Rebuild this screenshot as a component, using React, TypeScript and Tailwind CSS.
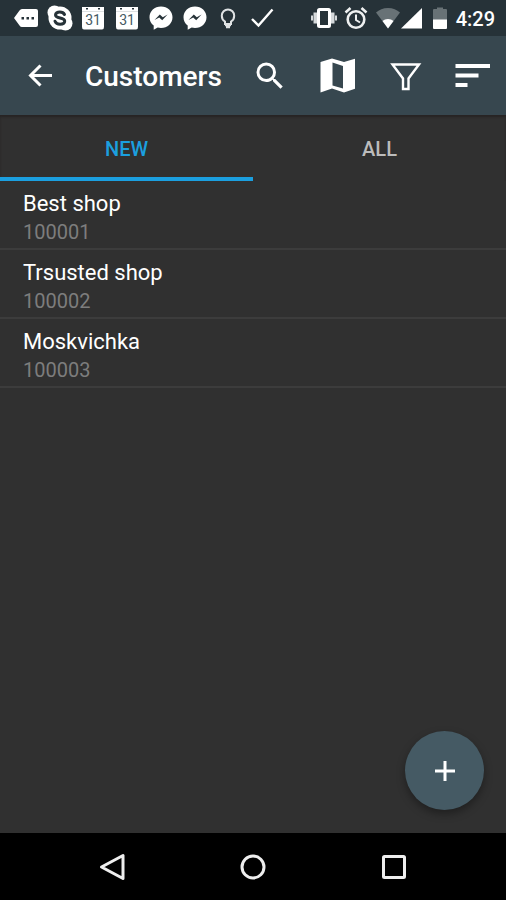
import { useState } from "react";
import type { ReactNode } from "react";

type Customer = { name: string; code: string };

const customers: Customer[] = [
  { name: "Best shop", code: "100001" },
  { name: "Trsusted shop", code: "100002" },
  { name: "Moskvichka", code: "100003" },
];

function MessageIcon() {
  return (
    <svg className="h-6 w-6" viewBox="0 0 24 24" aria-hidden="true">
      <path d="M0 12 5.5 4.5Q6.500 3 8 3H22q2 0 2 2v14q0 2-2 2H8q-1.500 0-2.500-1.500z" fill="#fff" />
      <path d="M7.500 11h2.500v2.500H7.500zM12.500 11H15v2.500h-2.500zM17.500 11H20v2.500h-2.500z" fill="#263238" />
    </svg>
  );
}

function SkypeIcon() {
  return (
    <svg className="h-6 w-6 overflow-visible" viewBox="0 0 24 24" aria-hidden="true">
      <circle cx="12" cy="12" r="11.500" fill="#fff" />
      <circle cx="6.500" cy="6.500" r="7" fill="#fff" />
      <circle cx="17.500" cy="17.500" r="7" fill="#fff" />
      <path
        d="M16.500 8.500C15.500 6.500 13.800 6 11.800 6 9.300 6 7.500 7.200 7.500 9c0 4 9.200 2 9.200 6 0 2-2 3.200-4.600 3.200-2.500 0-4.300-1-5.100-3"
        fill="none"
        stroke="#263238"
        strokeWidth="3"
        strokeLinecap="round"
      />
    </svg>
  );
}

function CalendarIcon() {
  return (
    <svg className="h-6 w-6" viewBox="0 0 24 24" aria-hidden="true">
      <path d="M1 1h22v20q0 2.500-2 2.500H3q-2 0-2-2.500z" fill="#fff" />
      <path d="M5 2h2v1.500H5zM17 2h2v1.500h-2z" fill="#263238" />
      <path d="M1 5.500h22" stroke="#dde0e1" strokeWidth="1" />
      <text x="12" y="19" textAnchor="middle" fontSize="14" fill="#455a64" fontFamily="Roboto, sans-serif">
        31
      </text>
    </svg>
  );
}

function MessengerIcon() {
  return (
    <svg className="h-6 w-6" viewBox="0 0 24 24" aria-hidden="true">
      <path d="M12 .5C5.500.5.5 5.200.5 11.200c0 3.400 1.600 6.300 4.200 8.300v4.300l4-2.200c1 .3 2.100.4 3.300.4 6.500 0 11.500-4.800 11.500-10.800S18.500.5 12 .5z" fill="#fff" />
      <path d="M5.500 14 10.800 8.500l3 2.700 4.800-2.700-5.400 5.700-3-2.700z" fill="#263238" />
    </svg>
  );
}

function BulbIcon() {
  return (
    <svg className="h-6 w-6" viewBox="0 0 24 24" aria-hidden="true" fill="none" stroke="#e0e3e4">
      <path d="M9 15.500C6.800 14.200 5.800 12 5.800 9.700a6.200 6.200 0 0 1 12.400 0c0 2.300-1 4.500-3.200 5.800v2.500H9z" strokeWidth="2" />
      <path d="M9 19.200h6M10 21.200h4" strokeWidth="2" />
    </svg>
  );
}

function CheckIcon() {
  return (
    <svg className="h-6 w-6" viewBox="0 0 24 24" aria-hidden="true">
      <path d="M2 13 8.500 19.500 22.500 3.500" fill="none" stroke="#fff" strokeWidth="2.400" />
    </svg>
  );
}

function VibrateIcon() {
  return (
    <svg className="h-6 w-7" viewBox="0 0 28 24" aria-hidden="true">
      <rect x="8.500" y="3.500" width="11" height="17" rx="1" fill="none" stroke="#fff" strokeWidth="3" />
      <path d="M3.500 6.500h3.500v11h-3.500zM21 6.500h3.500v11h-3.500zM1 9.500h2v5H1zM25 9.500H27v5h-2z" fill="#d5d9db" />
    </svg>
  );
}

function AlarmIcon() {
  return (
    <svg className="h-6 w-6" viewBox="0 0 24 24" aria-hidden="true" fill="none" stroke="#eef0f0">
      <circle cx="12" cy="13.500" r="8.300" strokeWidth="2.600" />
      <path d="M12 8.500v5.500l4 2.500" strokeWidth="2" />
      <path d="M1.500 6.500 6.500 2M22.500 6.500 17.500 2" strokeWidth="2.600" />
    </svg>
  );
}

function WifiIcon() {
  return (
    <svg className="h-6 w-6" viewBox="0 0 24 24" aria-hidden="true">
      <path d="M12 22.500 0 6.500C3 3.800 7.200 2 12 2s9 1.800 12 4.500z" fill="#687276" />
      <path d="M12 22.500 6.500 15c1.500-1.200 3.400-2 5.500-2s4 .8 5.500 2z" fill="#fff" />
    </svg>
  );
}

function SignalIcon() {
  return (
    <svg className="h-6 w-6" viewBox="0 0 24 24" aria-hidden="true">
      <path d="M22 2V22.500H1z" fill="#fff" />
    </svg>
  );
}

function BatteryIcon() {
  return (
    <svg className="h-6 w-4" viewBox="0 0 16 24" aria-hidden="true">
      <path d="M1 14V4q0-1 1-1h3V1.500h6v1.500h3q1 0 1 1v10z" fill="#687276" />
      <path d="M1 13.500h14v8.500q0 1-1 1H2q-1 0-1-1z" fill="#fff" />
    </svg>
  );
}

function StatusBar() {
  return (
    <div className="flex h-9 items-center justify-between bg-[#263238] pr-[11px] pl-[14px]">
      <div className="flex w-[260px] items-center justify-between">
        <MessageIcon />
        <SkypeIcon />
        <CalendarIcon />
        <CalendarIcon />
        <MessengerIcon />
        <MessengerIcon />
        <BulbIcon />
        <CheckIcon />
      </div>
      <div className="flex items-center">
        <div className="flex items-center gap-1.5">
          <VibrateIcon />
          <AlarmIcon />
        </div>
        <div className="ml-2 flex items-center">
          <WifiIcon />
          <SignalIcon />
        </div>
        <div className="ml-2 flex items-center gap-2">
          <BatteryIcon />
          <time className="pt-0.5 text-xl leading-6 font-medium">4:29</time>
        </div>
      </div>
    </div>
  );
}

function BarButton({ label, children }: { label: string; children: ReactNode }) {
  return (
    <button type="button" aria-label={label} className="flex h-full items-center justify-center">
      {children}
    </button>
  );
}

function AppBar() {
  return (
    <header className="flex h-[79px] items-center bg-[#37474f]">
      <button type="button" aria-label="Back" className="flex h-full w-20 items-center justify-center">
        <svg className="h-9 w-9" viewBox="0 0 36 36" aria-hidden="true" fill="none" stroke="#fff" strokeWidth="3">
          <path d="M30 17.500H8.500M18.500 7.500 8.500 17.500l10 10" />
        </svg>
      </button>
      <h1 className="flex-1 pt-0.5 pl-[5px] text-[28px] leading-9 font-medium">Customers</h1>
      <div className="grid h-full w-[270px] grid-cols-4">
        <BarButton label="Search">
          <svg className="h-9 w-9" viewBox="0 0 24 24" aria-hidden="true">
            <path
              d="M15.500 14h-.79l-.28-.27A6.471 6.471 0 0 0 16 9.500 6.500 6.500 0 1 0 9.500 16c1.610 0 3.090-.59 4.230-1.570l.27.28v.79l5 4.990L20.490 19l-4.990-5zm-6 0C7.010 14 5 11.990 5 9.500S7.010 5 9.500 5 14 7.010 14 9.500 11.990 14 9.500 14z"
              fill="#fff"
            />
          </svg>
        </BarButton>
        <BarButton label="Map">
          <svg className="h-9 w-9" viewBox="0 0 36 36" aria-hidden="true">
            <path
              fillRule="evenodd"
              d="M1.500 4 13 .5 25 4 36.500 .5V30.500L25 34.500 13 30.500 1.500 34.500zM13.500 4.500v23l10.500 3V8z"
              fill="#fff"
            />
          </svg>
        </BarButton>
        <BarButton label="Filter">
          <svg className="h-9 w-9" viewBox="0 0 36 36" aria-hidden="true">
            <path
              d="M5.500 6.500h26.500L21.500 20.500V31h-5.500V20.500z"
              fill="none"
              stroke="#fff"
              strokeWidth="2.400"
            />
          </svg>
        </BarButton>
        <BarButton label="Sort">
          <svg className="h-9 w-9" viewBox="0 0 36 36" aria-hidden="true">
            <path d="M1.500 6h34.500v4H1.500zM1.500 15.500h23v4h-23zM1.500 25h12v4h-12z" fill="#fff" />
          </svg>
        </BarButton>
      </div>
    </header>
  );
}

function Tab({ label, selected, onSelect }: { label: string; selected: boolean; onSelect: () => void }) {
  return (
    <button
      type="button"
      role="tab"
      aria-selected={selected}
      onClick={onSelect}
      className={
        selected
          ? "border-b-4 border-[#1b9fdf] pt-1.5 text-xl leading-6 font-medium text-[#1b9fdf]"
          : "border-b-4 border-transparent pt-1.5 text-xl leading-6 font-medium text-[#bcbcbc]"
      }
    >
      {label}
    </button>
  );
}

function NavigationBar() {
  return (
    <nav className="flex h-[67px] items-center justify-center gap-[113px] bg-black">
      <button type="button" aria-label="Back">
        <svg className="h-7 w-7" viewBox="0 0 28 28" aria-hidden="true">
          <path d="M25 2.500v23L3.500 14z" fill="none" stroke="#eee" strokeWidth="3" strokeLinejoin="round" />
        </svg>
      </button>
      <button type="button" aria-label="Home">
        <svg className="h-7 w-7" viewBox="0 0 28 28" aria-hidden="true">
          <circle cx="14" cy="14" r="11" fill="none" stroke="#eee" strokeWidth="3" />
        </svg>
      </button>
      <button type="button" aria-label="Recent apps">
        <svg className="h-7 w-7" viewBox="0 0 28 28" aria-hidden="true">
          <rect x="3.500" y="3.500" width="21" height="21" rx="1" fill="none" stroke="#eee" strokeWidth="3" />
        </svg>
      </button>
    </nav>
  );
}

export default function App() {
  const [tab, setTab] = useState("new");

  return (
    <div className="flex min-h-screen flex-col bg-[#303030] font-[Roboto,sans-serif] text-white">
      <StatusBar />
      <AppBar />
      <main className="relative flex-1">
        <div role="tablist" className="grid h-[66px] grid-cols-2 shadow-[inset_0_2px_2px_#272424]">
          <Tab label="NEW" selected={tab === "new"} onSelect={() => setTab("new")} />
          <Tab label="ALL" selected={tab === "all"} onSelect={() => setTab("all")} />
        </div>
        <ul>
          {customers.map((customer) => (
            <li key={customer.code} className="h-[69px] border-b-2 border-[#3c3c3c] px-[23px] pt-2">
              <p className="text-[22px] leading-[29px]">{customer.name}</p>
              <p className="text-xl leading-[29px] text-[#7d7d7d]">{customer.code}</p>
            </li>
          ))}
        </ul>
        <button
          type="button"
          aria-label="Add customer"
          className="absolute right-[22px] bottom-[23px] flex h-[79px] w-[79px] items-center justify-center rounded-full bg-[#455a64] shadow-[0_4px_8px_rgba(0,0,0,0.35)]"
        >
          <svg className="h-6 w-6" viewBox="0 0 24 24" aria-hidden="true">
            <path d="M12 2v20M2 12h20" stroke="#fff" strokeWidth="3" />
          </svg>
        </button>
      </main>
      <NavigationBar />
    </div>
  );
}
